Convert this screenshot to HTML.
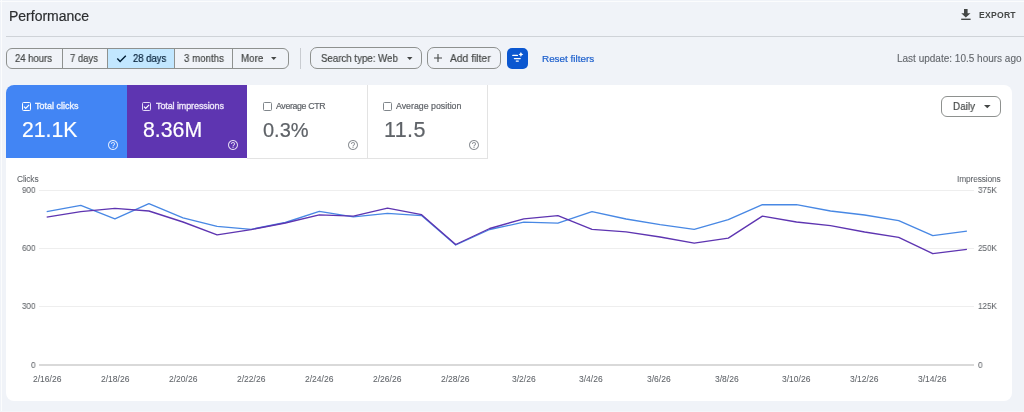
<!DOCTYPE html>
<html><head><meta charset="utf-8">
<style>
*{margin:0;padding:0;box-sizing:border-box}
html,body{width:1024px;height:412px;overflow:hidden;background:#f0f3f8;-webkit-font-smoothing:antialiased;font-family:"Liberation Sans",sans-serif;position:relative}
.a{position:absolute;white-space:nowrap;line-height:1;will-change:transform;-webkit-text-stroke:0.2px currentColor}
.box{position:absolute}
.t9{font-size:9.5px;color:#444746}
.ax{position:absolute;will-change:transform;-webkit-text-stroke:0.05px currentColor;font-size:8.5px;color:#5f6368;white-space:nowrap;line-height:1}
</style></head><body>
<div class="box" style="left:0;top:1px;width:1024px;height:1px;background:#fbfcfd"></div>
<div class="box" style="left:1px;top:0;width:1px;height:412px;background:#fbfcfd"></div>

<div class="a" style="left:9px;top:8.5px;font-size:14px;color:#2d2f31">Performance</div>
<svg class="box" style="left:961px;top:9px" width="10" height="11" viewBox="0 0 10 11"><path d="M3 0h3.6v4.2h2.9L4.8 8.4 0.3 4.2h2.7z" fill="#444746"/><rect x="0.2" y="9.6" width="9.4" height="1.4" fill="#444746"/></svg>
<div class="a" style="left:979px;top:11px;font-size:8.6px;font-weight:bold;color:#444746;letter-spacing:0.25px;-webkit-text-stroke:0">EXPORT</div>
<div class="box" style="left:6px;top:36px;width:1018px;height:1px;background:#cfd3d8"></div>

<!-- segmented buttons -->
<div class="box" style="left:6px;top:47.6px;width:283px;height:21.2px;border:1px solid #8e918f;border-radius:6px;overflow:hidden">
  <div class="box" style="left:100px;top:0;width:67px;height:20px;background:#c2e7ff"></div>
  <div class="box" style="left:55px;top:0;width:1px;height:20px;background:#8e918f"></div>
  <div class="box" style="left:100px;top:0;width:1px;height:20px;background:#8e918f"></div>
  <div class="box" style="left:167px;top:0;width:1px;height:20px;background:#8e918f"></div>
  <div class="box" style="left:225px;top:0;width:1px;height:20px;background:#8e918f"></div>
</div>
<div class="a t9" style="left:15px;top:52.77px;font-size:10.83px;transform:scaleX(0.877);transform-origin:0 0">24 hours</div>
<div class="a t9" style="left:70px;top:52.77px;font-size:10.83px;transform:scaleX(0.877);transform-origin:0 0">7 days</div>
<svg class="box" style="left:116px;top:54px" width="11" height="9"><path d="M1.3 4.6l2.8 2.8L9.8 1.7" stroke="#001d35" stroke-width="1.4" fill="none"/></svg>
<div class="a t9" style="left:133px;top:52.77px;color:#001d35;font-size:10.83px;transform:scaleX(0.877);transform-origin:0 0">28 days</div>
<div class="a t9" style="left:183.5px;top:52.75px;font-size:11.06px;transform:scaleX(0.877);transform-origin:0 0">3 months</div>
<div class="a t9" style="left:240.5px;top:52.74px;font-size:11.17px;transform:scaleX(0.877);transform-origin:0 0">More</div>
<svg class="box" style="left:271px;top:57px" width="6" height="4"><path d="M0 0h5.5L2.75 3z" fill="#444746"/></svg>

<div class="box" style="left:300px;top:48px;width:1px;height:21px;background:#c9ccd1"></div>
<div class="box" style="left:310px;top:47px;width:112px;height:22px;border:1px solid #8e918f;border-radius:7px"></div>
<div class="a t9" style="left:321px;top:52.75px;font-size:11.06px;transform:scaleX(0.877);transform-origin:0 0">Search type: Web</div>
<svg class="box" style="left:407px;top:57px" width="6" height="4"><path d="M0 0h5.5L2.75 3z" fill="#444746"/></svg>
<div class="box" style="left:427px;top:47px;width:74px;height:22px;border:1px solid #8e918f;border-radius:7px"></div>
<svg class="box" style="left:434.4px;top:54.4px" width="8" height="8"><path d="M3.45 0h1.1v3.45H8v1.1H4.55V8h-1.1V4.55H0v-1.1h3.45z" fill="#444746"/></svg>
<div class="a t9" style="left:449.5px;top:51.9px;font-size:11.74px;transform:scaleX(0.877);transform-origin:0 0">Add filter</div>
<div class="box" style="left:507px;top:48px;width:21px;height:21px;background:#0b57d0;border-radius:5px"></div>
<svg class="box" style="left:507px;top:48px" width="21" height="21"><g stroke="#fff" stroke-width="1.3" stroke-linecap="round"><path d="M5.8 7.4h4.6M7.4 10.6h5.8M9.3 13.1h2"/></g><path d="M13.9 4.1Q14.3 6.1 16.3 6.5Q14.3 6.9 13.9 8.9Q13.5 6.9 11.5 6.5Q13.5 6.1 13.9 4.1z" fill="#fff"/></svg>
<div class="a" style="left:541.5px;top:53.6px;font-size:9.9px;color:#1c5fcc">Reset filters</div>
<div class="a" style="left:897px;top:54px;font-size:10px;color:#62666b;-webkit-text-stroke:0.1px currentColor">Last update: 10.5 hours ago</div>

<!-- card -->
<div class="box" style="left:6px;top:85px;width:1006px;height:316px;background:#fff;border-radius:8px;overflow:hidden">
  <div class="box" style="left:0;top:0;width:121px;height:73px;background:#4285f4"></div>
  <div class="box" style="left:120.5px;top:0;width:120.5px;height:73px;background:#5e35b1"></div>
  <div class="box" style="left:241px;top:0;width:121px;height:74px;border-right:1px solid #e3e3e3;border-bottom:1px solid #e3e3e3"></div>
  <div class="box" style="left:361px;top:0;width:121px;height:74px;border-right:1px solid #e3e3e3;border-bottom:1px solid #e3e3e3"></div>
</div>
<!-- tile contents -->
<div class="box" style="left:22px;top:102px;width:9px;height:9px;border:1.2px solid #fff;border-radius:1.5px"></div>
<svg class="box" style="left:22px;top:102px" width="9" height="9"><path d="M2 4.6l1.7 1.7 3.4-3.5" stroke="#fff" stroke-width="1.2" fill="none"/></svg>
<div class="a" style="left:35px;top:102px;font-size:9px;color:#f0f5ff;-webkit-text-stroke:0.35px #f0f5ff">Total clicks</div>
<div class="a" style="left:21.6px;top:119px;font-size:21.2px;color:#fff">21.1K</div>
<div class="box" style="left:142px;top:102px;width:9px;height:9px;border:1.3px solid #e3d9f7;border-radius:1.5px"></div>
<svg class="box" style="left:142px;top:102px" width="9" height="9"><path d="M2 4.6l1.7 1.7 3.4-3.5" stroke="#fff" stroke-width="1.2" fill="none"/></svg>
<div class="a" style="left:156px;top:102px;font-size:9px;color:#ede6fa;-webkit-text-stroke:0.35px #ede6fa;letter-spacing:-0.1px">Total impressions</div>
<div class="a" style="left:143px;top:119.5px;font-size:21.3px;color:#fff">8.36M</div>

<div class="box" style="left:263px;top:102px;width:9px;height:9px;border:1px solid #80868b;border-radius:1.5px"></div>
<div class="a" style="left:276px;top:102px;font-size:8.8px;letter-spacing:-0.35px;color:#5f6368">Average CTR</div>
<div class="a" style="left:263px;top:120px;font-size:20px;color:#5f6368">0.3%</div>
<div class="box" style="left:383px;top:102px;width:9px;height:9px;border:1px solid #80868b;border-radius:1.5px"></div>
<div class="a" style="left:396px;top:102px;font-size:8.8px;color:#5f6368">Average position</div>
<div class="a" style="left:384px;top:120px;font-size:21.5px;letter-spacing:0.4px;color:#5f6368">11.5</div>

<!-- help icons -->
<svg class="box" style="left:106.7px;top:139.2px" width="12" height="12" viewBox="0 0 24 24"><path d="M11 18h2v-2h-2v2zm1-16C6.48 2 2 6.48 2 12s4.48 10 10 10 10-4.48 10-10S17.52 2 12 2zm0 18c-4.41 0-8-3.59-8-8s3.59-8 8-8 8 3.59 8 8-3.59 8-8 8zm0-14c-2.21 0-4 1.79-4 4h2c0-1.1.9-2 2-2s2 .9 2 2c0 2-3 1.75-3 5h2c0-2.25 3-2.5 3-5 0-2.21-1.79-4-4-4z" fill="rgba(255,255,255,.8)"/></svg>
<svg class="box" style="left:226.7px;top:139.2px" width="12" height="12" viewBox="0 0 24 24"><path d="M11 18h2v-2h-2v2zm1-16C6.48 2 2 6.48 2 12s4.48 10 10 10 10-4.48 10-10S17.52 2 12 2zm0 18c-4.41 0-8-3.59-8-8s3.59-8 8-8 8 3.59 8 8-3.59 8-8 8zm0-14c-2.21 0-4 1.79-4 4h2c0-1.1.9-2 2-2s2 .9 2 2c0 2-3 1.75-3 5h2c0-2.25 3-2.5 3-5 0-2.21-1.79-4-4-4z" fill="rgba(255,255,255,.8)"/></svg>
<svg class="box" style="left:347.1px;top:139.2px" width="12" height="12" viewBox="0 0 24 24"><path d="M11 18h2v-2h-2v2zm1-16C6.48 2 2 6.48 2 12s4.48 10 10 10 10-4.48 10-10S17.52 2 12 2zm0 18c-4.41 0-8-3.59-8-8s3.59-8 8-8 8 3.59 8 8-3.59 8-8 8zm0-14c-2.21 0-4 1.79-4 4h2c0-1.1.9-2 2-2s2 .9 2 2c0 2-3 1.75-3 5h2c0-2.25 3-2.5 3-5 0-2.21-1.79-4-4-4z" fill="#8f9398"/></svg>
<svg class="box" style="left:467.7px;top:139.2px" width="12" height="12" viewBox="0 0 24 24"><path d="M11 18h2v-2h-2v2zm1-16C6.48 2 2 6.48 2 12s4.48 10 10 10 10-4.48 10-10S17.52 2 12 2zm0 18c-4.41 0-8-3.59-8-8s3.59-8 8-8 8 3.59 8 8-3.59 8-8 8zm0-14c-2.21 0-4 1.79-4 4h2c0-1.1.9-2 2-2s2 .9 2 2c0 2-3 1.75-3 5h2c0-2.25 3-2.5 3-5 0-2.21-1.79-4-4-4z" fill="#8f9398"/></svg>
<!-- Daily -->
<div class="box" style="left:941px;top:95.6px;width:60px;height:21.8px;border:1px solid #8e918f;border-radius:6px"></div>
<div class="a t9" style="left:952.5px;top:100.73px;font-size:11.29px;transform:scaleX(0.877);transform-origin:0 0">Daily</div>
<svg class="box" style="left:984px;top:105px" width="7" height="4"><path d="M0 0h6.6L3.3 3.3z" fill="#444746"/></svg>

<svg class="box" style="left:0;top:0" width="1024" height="412">
  <g stroke="#eeeeee" stroke-width="1">
    <path d="M39 190.5H974M39 248.5H974M39 306.5H974"/>
  </g>
  <path d="M39 365H974" stroke="#cdcdcd" stroke-width="1.7"/>
  <g fill="none" stroke-width="1.35" stroke-linejoin="round">
  <path stroke="#4888e4" d="M46.7 211.7 L80.8 205.4 L114.9 218.8 L148.9 203.7 L183.0 217.8 L217.1 226.4 L251.2 229.3 L285.3 222.5 L319.3 211.3 L353.4 216.9 L387.5 213.4 L421.6 215.6 L455.7 245.0 L489.7 229.5 L523.8 222.2 L557.9 223.2 L592.0 211.7 L626.1 219.0 L660.1 224.7 L694.2 229.4 L728.3 219.6 L762.4 204.7 L796.5 204.7 L830.5 211.0 L864.6 215.0 L898.7 220.6 L932.8 235.6 L966.9 231.2"/>
  <path stroke="#5e35b1" d="M46.7 217.1 L80.8 211.7 L114.9 208.3 L148.9 211.0 L183.0 222.0 L217.1 234.9 L251.2 229.6 L285.3 223.0 L319.3 214.9 L353.4 216.1 L387.5 208.1 L421.6 214.7 L455.7 244.5 L489.7 228.5 L523.8 218.8 L557.9 215.6 L592.0 229.3 L626.1 231.8 L660.1 237.0 L694.2 243.2 L728.3 238.1 L762.4 216.1 L796.5 222.0 L830.5 225.7 L864.6 232.0 L898.7 237.4 L932.8 253.7 L966.9 249.3"/>
  </g>
</svg>
<div class="ax" style="left:17px;top:174.5px;font-size:8.4px;letter-spacing:-0.15px">Clicks</div>
<div class="ax" style="left:957px;top:174.5px;font-size:8.4px;letter-spacing:-0.15px">Impressions</div>
<div class="ax" style="left:21.7px;top:185.7px;font-size:9.2px;transform:scaleX(0.88);transform-origin:0 0">900</div>
<div class="ax" style="left:21.7px;top:243.7px;font-size:9.2px;transform:scaleX(0.88);transform-origin:0 0">600</div>
<div class="ax" style="left:21.7px;top:301.7px;font-size:9.2px;transform:scaleX(0.88);transform-origin:0 0">300</div>
<div class="ax" style="left:30.5px;top:360.9px;font-size:9.2px;transform:scaleX(0.88);transform-origin:0 0">0</div>
<div class="ax" style="left:977.6px;top:185.8px;font-size:9.2px;transform:scaleX(0.88);transform-origin:0 0">375K</div>
<div class="ax" style="left:977.6px;top:243.9px;font-size:9.2px;transform:scaleX(0.88);transform-origin:0 0">250K</div>
<div class="ax" style="left:977.6px;top:302.2px;font-size:9.2px;transform:scaleX(0.88);transform-origin:0 0">125K</div>
<div class="ax" style="left:977.6px;top:360.9px;font-size:9.2px;transform:scaleX(0.88);transform-origin:0 0">0</div>
<div class="ax" style="left:33px;top:375.4px">2/16/26</div>
<div class="ax" style="left:101px;top:375.4px">2/18/26</div>
<div class="ax" style="left:169px;top:375.4px">2/20/26</div>
<div class="ax" style="left:237px;top:375.4px">2/22/26</div>
<div class="ax" style="left:305px;top:375.4px">2/24/26</div>
<div class="ax" style="left:373px;top:375.4px">2/26/26</div>
<div class="ax" style="left:441px;top:375.4px">2/28/26</div>
<div class="ax" style="left:511.5px;top:375.4px">3/2/26</div>
<div class="ax" style="left:579px;top:375.4px">3/4/26</div>
<div class="ax" style="left:647px;top:375.4px">3/6/26</div>
<div class="ax" style="left:715px;top:375.4px">3/8/26</div>
<div class="ax" style="left:782px;top:375.4px">3/10/26</div>
<div class="ax" style="left:850px;top:375.4px">3/12/26</div>
<div class="ax" style="left:918px;top:375.4px">3/14/26</div>
<div class="box" style="left:0;top:411px;width:1024px;height:1px;background:#f4f6fa"></div>
</body></html>
